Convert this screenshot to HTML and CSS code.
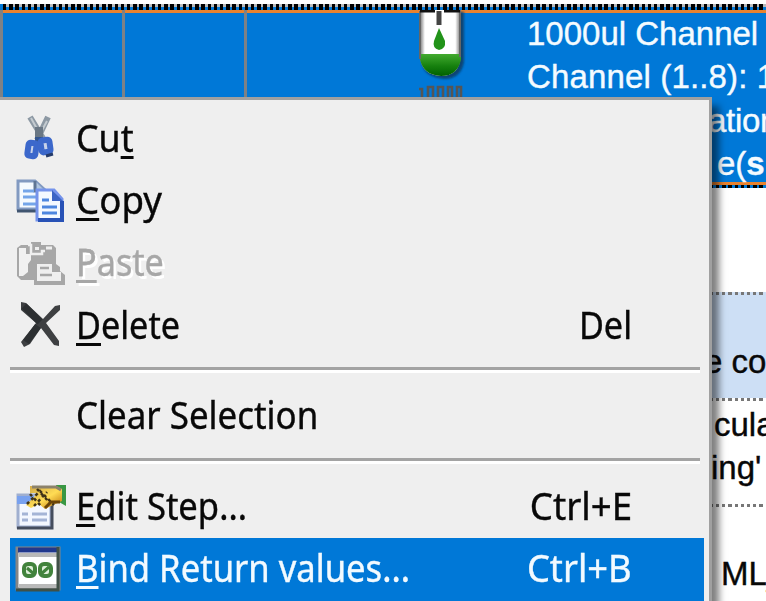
FILE: index.html
```html
<!DOCTYPE html>
<html lang="en">
<head>
<meta charset="utf-8">
<title>Method editor</title>
<link rel="stylesheet" href="styles.css">
</head>
<body>
<main class="steps">
  <section class="step selected">
    <div class="cell edge"></div>
    <div class="cell"></div>
    <div class="cell wide">
      <svg class="tube" width="50" height="88" viewBox="0 0 50 88">
        <defs>
          <linearGradient id="fluid" x2="0" y2="1"><stop stop-color="#43aa2f"/><stop offset=".55" stop-color="#16800e"/><stop offset="1" stop-color="#006000"/></linearGradient>
          <linearGradient id="glass"><stop stop-color="#777"/><stop offset=".12" stop-color="#fff"/><stop offset=".86" stop-color="#fff"/><stop offset="1" stop-color="#666"/></linearGradient>
          <filter id="soft"><feGaussianBlur stdDeviation="1.3"/></filter>
        </defs>
        <path d="M4 2H46V52Q43 69 26 69Q6 67 4 53Z" fill="#074575" filter="url(#soft)"/>
        <path d="M2 0H43V47Q41 66 23 66Q5 65 2 49Z" fill="url(#glass)"/>
        <path d="M2 44H43V49Q40 66 23 66Q5 65 2 49Z" fill="url(#fluid)"/>
        <path d="M2 1V49M42 1V47" stroke="#666" stroke-width="2"/>
        <path d="M2 1H17M26 1H42" stroke="#111" stroke-width="3"/>
        <path d="M21 1V15" stroke="#444" stroke-width="5"/>
        <path d="M21 18L27 31Q28 39 21 40Q14 38 16 31Z" fill="#229319"/>
        <path d="M1 79H4V88M10 88V77H15V88M20 88V77H25V88M30 88V77H34V88M39 88V77H43V88" fill="none" stroke="#555" stroke-width="2.6"/>
      </svg>
    </div>
    <div class="details">
      <p>1000ul Channel</p>
      <p class="l2">Channel (1..8): 1</p>
      <p class="l3">ation</p>
      <p class="l4">e(<b>s</b></p>
    </div>
  </section>
  <section class="step blank"></section>
  <section class="step tinted"><p>e co</p></section>
  <section class="step note"><p>cula</p><p class="ing">ing'</p></section>
  <section class="step last"><p>ML_</p></section>
</main>

<nav class="menu">
  <div class="item">
    <svg class="icon" width="60" height="50" viewBox="-5 1 60 50">
      <path d="M15 4L29 27M33 4L22 27" stroke="#8d99a4" stroke-width="6"/>
      <path d="M16 5L27 25M32 8L25 21" stroke="#c4cbd0" stroke-width="2"/>
      <path d="M24 14V27" stroke="#6a7784" stroke-width="8"/>
      <path d="M20 24H28V30H20Z" fill="#34568f"/>
      <rect x="13" y="30" width="8" height="13" rx="2" fill="#c8d3ea" stroke="#3c68cb" stroke-width="6" transform="rotate(8 17 36)"/>
      <rect x="26" y="27" width="9" height="12" rx="2" fill="#c8d3ea" stroke="#3c68cb" stroke-width="6" transform="rotate(-8 31 33)"/>
      <path d="M31 43L38 41" stroke="#263c6b" stroke-width="3"/>
    </svg>
    <span class="label cut">Cu<u>t</u></span>
  </div>
  <div class="item">
    <svg class="icon" width="60" height="50" viewBox="0 1 60 50">
      <path d="M8 6H25L36 16V34H8Z" fill="#f5faff" stroke="#829ac1" stroke-width="3"/>
      <path d="M7 36H28" stroke="#405570" stroke-width="3"/>
      <path d="M25 6V16H35" fill="#b1c6df" stroke="#607695" stroke-width="3"/>
      <path d="M13 16H24M13 22H26M13 29H26" stroke="#74a5e9" stroke-width="3"/>
      <path d="M27 15H44L52 24V45H27Z" fill="#f4f9ff" stroke="#7593eb" stroke-width="3"/>
      <path d="M42 15V26H53Z" fill="#3d65c5"/>
      <path d="M28 45H52V26" fill="none" stroke="#2852b6" stroke-width="4"/>
      <path d="M32 25H39M32 32H47M32 38H47" stroke="#4d86df" stroke-width="3"/>
    </svg>
    <span class="label copy"><u>C</u>opy</span>
  </div>
  <div class="item disabled">
    <svg class="icon" width="60" height="50" viewBox="1 0 60 50">
      <path d="M12 7H22V4H32V7H44L47 10V26L51 29V33L56 37V47H25V42H12L8 38V10Z" fill="#a7a7a7"/>
      <path d="M10 10H17V16H22V22L19 26V34L14 38H10Z" fill="#f1f1f1"/>
      <path d="M19 7H22V16H33V13H36" fill="none" stroke="#efefef" stroke-width="2.5"/>
      <rect x="26" y="9" width="4" height="3" fill="#efefef"/>
      <path d="M37 10H43" stroke="#efefef" stroke-width="3"/>
      <path d="M28 26H43V34H52V43H28Z" fill="#efefef"/>
      <path d="M31 30H40M31 37H43" stroke="#a7a7a7" stroke-width="2.5"/>
    </svg>
    <span class="label paste"><u>P</u>aste</span>
  </div>
  <div class="item">
    <svg class="icon" width="60" height="50" viewBox="0 0 60 50">
      <path d="M11 1L16 2L33 18L45 5L50 4V9L36 22L49 40V45L44 44L31 27L20 43L14 46L11 41L26 22L11 9Z" fill="#3e4042"/>
      <path d="M14 5L30 21M16 41L28 25" stroke="#2c2f31" stroke-width="7"/>
    </svg>
    <span class="label delete"><u>D</u>elete</span><kbd class="del">Del</kbd>
  </div>
  <hr>
  <div class="item"><span class="icon"></span><span class="label clear">Clear Selection</span></div>
  <hr>
  <div class="item">
    <svg class="icon" width="60" height="50" viewBox="0 0 60 50">
      <defs><linearGradient id="gold" x2="1" y2="1"><stop stop-color="#cda448"/><stop offset=".55" stop-color="#ffdc54"/><stop offset="1" stop-color="#b76900"/></linearGradient></defs>
      <path d="M8 13H41V45H8Z" fill="#f3f7ff" stroke="#a0afcf" stroke-width="3"/>
      <path d="M7 14H24V22H7Z" fill="#78a1ef"/>
      <path d="M7 46H42V20" fill="none" stroke="#454d5d" stroke-width="3"/>
      <path d="M12 32H18M22 32H37M12 38H18M22 38H37" stroke="#a4b4d6" stroke-width="3"/>
      <path d="M46 3H56V24L49 20Z" fill="#399743"/>
      <path d="M20 4H46L52 7V19L43 23L35 27L29 22L21 26L16 23L28 11H20Z" fill="url(#gold)"/>
      <path d="M22 5H46L51 8" fill="none" stroke="#8c826b" stroke-width="3"/>
      <path d="M17 22L30 9L44 23M24 24L37 10M27 7L40 21M20 12L31 24" fill="none" stroke="#403318" stroke-width="2.5" stroke-dasharray="3 3"/>
      <path d="M35 26L41 20H50" fill="none" stroke="#6b4508" stroke-width="3"/>
    </svg>
    <span class="label edit"><u>E</u>dit Step...</span><kbd class="ctrle">Ctrl+E</kbd>
  </div>
  <div class="item active">
    <svg class="icon" width="60" height="50" viewBox="1 0 60 50">
      <path d="M8 4H50V45H8Z" fill="#fff" stroke="#858585" stroke-width="3"/>
      <path d="M10 11H49M10 42H49" stroke="#b9b9b9" stroke-width="4"/>
      <path d="M9 6H50" stroke="#21388d" stroke-width="5"/>
      <path d="M7 46H49V3" fill="none" stroke="#405047" stroke-width="3"/>
      <rect x="15" y="20" width="11" height="12" rx="4" fill="#dff0da" stroke="#42833c" stroke-width="4"/>
      <rect x="31" y="20" width="11" height="12" rx="4" fill="#dff0da" stroke="#42833c" stroke-width="4"/>
      <path d="M18 24L25 30M32 30L40 23" stroke="#42833c" stroke-width="3"/>
    </svg>
    <span class="label bind"><u>B</u>ind Return values...</span><kbd class="ctrlb">Ctrl+B</kbd>
  </div>
</nav>
</body>
</html>
```
FILE: styles.css
```css
* { box-sizing: border-box; }
body {
  margin: 0;
  width: 766px;
  height: 601px;
  overflow: hidden;
  position: relative;
  background: #fff;
  color: #080808;
  font: 33px/43.4px "Liberation Sans", Arial, sans-serif;
  -webkit-text-stroke: .4px;
}
p { margin: 0; white-space: pre; }
.steps { padding-top: 4px; }
.step { overflow: hidden; }
.selected {
  display: flex;
  height: 184px;
  padding: 9px 0 5px;
  color: #f4fbff;
  background:
    repeating-linear-gradient(90deg, #000 0 3.4px, #bbb 3.4px 6.2px) 3px 0 / 100% 3px no-repeat,
    repeating-linear-gradient(90deg, #000 0 3.4px, #0078d7 3.4px 6.2px) 3px 3px / 100% 3px no-repeat,
    linear-gradient(#e7822f, #e7822f) 0 6px / 100% 3px no-repeat,
    linear-gradient(#e7822f, #e7822f) 0 178px / 100% 3px no-repeat,
    repeating-linear-gradient(90deg, #000 0 3.4px, #0078d7 3.4px 6.2px) 3px 181px / 100% 3px no-repeat,
    #0078d7;
}
.cell { flex: none; width: 122px; border-right: 3px solid #7d8185; margin-top: -3px; }
.cell.edge { width: 125px; border-left: 3px solid #7d8185; }
.cell.wide { width: 280px; border: 0; padding-left: 171px; }
.tube { display: block; }
.details { flex: none; margin-top: -1px; }
.l2 { letter-spacing: .15px; }
.l3 { padding-left: 181px; letter-spacing: -.3px; }
.l4 { padding-left: 190px; }
.blank { height: 104px; }
.tinted, .note, .last {
  background: repeating-linear-gradient(90deg, #777 0 3.2px, transparent 3.2px 6.2px) 3px 0 / 100% 3px no-repeat;
}
.tinted { height: 106px; padding: 48px 0 0 704px; background-color: #cddff5; }
.note { height: 106px; padding: 5px 0 0 714px; }
.ing { margin-left: -3px; }
.last { height: 97px; padding: 48px 0 0 721px; }
.menu {
  position: absolute;
  left: -8px;
  top: 97px;
  width: 720px;
  height: 520px;
  padding: 7.5px 5px 0 14.5px;
  border: 3px solid #a0a0a0;
  background: #efefef;
  box-shadow: 6px 10px 7px 1px rgba(0, 0, 0, .5);
  font: 38px/62.4px "Noto Sans", "Open Sans", sans-serif;
}
.item { display: flex; height: 62.4px; padding-right: 72px; }
.icon { flex: none; width: 60px; height: 50px; margin: 6px 6.5px 0 0; }
.label, kbd { display: block; white-space: pre; line-height: 59px; transform-origin: left; transform: scaleX(.9); }
kbd { font: inherit; line-height: 59px; margin-left: auto; transform-origin: right; }
.cut { transform: scaleX(.94); }
.copy { transform: scaleX(.965); }
.clear { transform: scaleX(.918); }
.edit { transform: scaleX(.91); }
.bind { transform: scaleX(.911); }
.ctrle { transform: scaleX(.965); }
.ctrlb { transform: scaleX(.955); }
u { text-decoration: underline; text-decoration-thickness: 3px; text-underline-offset: 4px; text-decoration-skip-ink: none; }
.disabled { color: #a7a7a7; text-shadow: 3px 3px #fff; }
.active { background: #0078d7; color: #f2faff; }
hr { height: 6px; margin: 10px 4px 12.3px 0; border: 0; border-top: 3px solid #a3a3a3; background: #fff; }
```
